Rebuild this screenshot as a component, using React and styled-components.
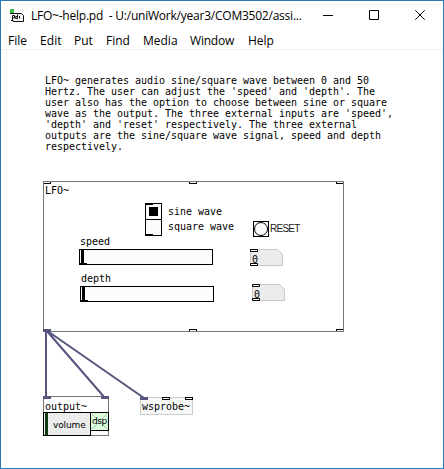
import React from 'react';
import styled, { createGlobalStyle } from 'styled-components';

const GlobalStyle = createGlobalStyle`
  * { box-sizing: border-box; }
  body { margin: 0; background: #fff; }
`;

const Window = styled.div`
  width: 444px;
  height: 469px;
  display: flex;
  flex-direction: column;
  overflow: hidden;
  background: #fff;
  border: 1px solid #2a7ab8;
  border-bottom-color: #1883d7;
  color: #000;
  font-family: "Open Sans", "Noto Sans", sans-serif;
`;

const TitleBar = styled.header`
  height: 29px;
  flex: none;
  display: flex;
  align-items: center;
  padding: 0 18px 0 9px;
`;

const Title = styled.div`
  flex: 1;
  margin-left: 5px;
  font-size: 12px;
  line-height: 16px;
  letter-spacing: -0.23px;
  white-space: pre;
`;

const WindowControls = styled.div`
  display: flex;
  gap: 36px;
  padding-bottom: 1px;
`;

const MenuBar = styled.nav`
  height: 20px;
  flex: none;
  display: flex;
  border-bottom: 1px solid #f0f0f0;
  padding-left: 7px;
  font-size: 12px;
  line-height: 22px;
`;

const MenuItem = styled.div`
  width: ${(p) => p.$width}px;
  letter-spacing: ${(p) => p.$track || 0}px;
  white-space: nowrap;
`;

const Canvas = styled.main`
  position: relative;
  flex: 1;
  font-family: "DejaVu Sans Mono", monospace;
  font-size: 10px;
  line-height: 11px;
  letter-spacing: -0.02px;
`;

/* A top-level object placed freely on the patch canvas. */
const Node = styled.section`
  position: absolute;
  left: ${(p) => p.$x - 1}px;
  top: ${(p) => p.$y - 50}px;
`;

const Comment = styled(Node)`
  white-space: pre;
`;

const Subpatch = styled(Node)`
  width: 301px;
  height: 151px;
  display: flex;
  flex-direction: column;
  border: 1px solid #777;
`;

const PortRow = styled.div`
  display: grid;
  grid-template-columns: 145px 147px 7px;
  height: 2px;
  margin-top: ${(p) => (p.$bottom ? 'auto' : '0')};
`;

const EdgePort = styled.div`
  width: 8px;
  border: solid #000;
  border-width: ${(p) => (p.$bottom ? '1px 1px 0' : '0 1px 1px')};
  &:first-child { width: 7px; border-left: 0; }
  &:last-child { width: 7px; border-right: 0; }
`;

const Name = styled.div`
  padding: 1px 0 0 1px;
`;

const ChoiceRow = styled.div`
  display: flex;
  height: 33px;
  margin-top: 7px;
  padding-left: 101px;
`;

const Radio = styled.div`
  width: 17px;
  height: 33px;
  border: 1px solid #000;
  background:
    linear-gradient(#000, #000) 0 0 / 7px 1px no-repeat,
    linear-gradient(#000, #000) 0 100% / 7px 1px no-repeat,
    #fcfcfc;
`;

const RadioCell = styled.div`
  height: 16px;
  display: grid;
  place-items: center;
  border-bottom: ${(p) => (p.$divided ? '1px solid #000' : '0')};
`;

const RadioMark = styled.div`
  width: 9px;
  height: 9px;
  background: #000;
`;

const ChoiceLabels = styled.div`
  width: 85px;
  display: flex;
  flex-direction: column;
  gap: 4px;
  margin-left: 6px;
  padding-top: 3px;
`;

const Bang = styled.div`
  width: 16px;
  height: 16px;
  margin-top: 18px;
  border: 1px solid #000;
  background: #fcfcfc;
`;

const BangCircle = styled.div`
  width: 14px;
  height: 14px;
  border: 1px solid #000;
  border-radius: 50%;
`;

const BangLabel = styled.div`
  margin: 20px 0 0 1px;
  font-family: "Liberation Sans", sans-serif;
  letter-spacing: -0.75px;
  color: #222;
`;

const ParamRow = styled.div`
  display: flex;
  align-items: flex-end;
  gap: ${(p) => p.$gap}px;
  height: 30px;
  margin-top: ${(p) => p.$space}px;
  padding-left: ${(p) => p.$indent}px;
`;

const Param = styled.label`
  align-self: flex-start;
  display: flex;
  flex-direction: column;
  gap: 2px;
  text-indent: 1px;
`;

const Slider = styled.div`
  width: 134px;
  height: 16px;
  border: 1px solid #000;
  background: linear-gradient(#000, #000) 0 100% / 7px 1px no-repeat, #fcfcfc;
  padding-left: 1px;
`;

const Knob = styled.div`
  width: 3px;
  height: 14px;
  background: #000;
`;

const NumberField = styled.div`
  display: grid;
  margin-bottom: ${(p) => p.$lift}px;
  > * { grid-area: 1 / 1; }
`;

const NumberValue = styled.span`
  height: 16px;
  padding: 5px 0 0 2px;
`;

const OutputBox = styled(Node)`
  width: 66px;
  height: 40px;
  border: 1px solid #777;
  padding: 4px 0 0 1px;
`;

const OutputControls = styled.div`
  display: flex;
  margin-left: -2px;
  font-family: "DejaVu Sans", sans-serif;
  font-size: 9px;
`;

const VolumeBox = styled.div`
  width: 48px;
  height: 24px;
  flex: none;
  display: flex;
  border: 1px solid #000;
  background: #ececec;
  padding-left: 1px;
  letter-spacing: -0.12px;
  line-height: 24px;
`;

const VolumeLevel = styled.div`
  width: 3px;
  height: 22px;
  margin-right: 5px;
  background: #123b12;
`;

const DspToggle = styled.div`
  width: 19px;
  height: 19px;
  flex: none;
  display: grid;
  margin-left: -1px;
  border: 1px solid #000;
  background: #dcfcdc;
  line-height: 17px;
  letter-spacing: -0.4px;
  > * { grid-area: 1 / 1; }
`;

const DspName = styled.span`
  width: 17px;
  padding-left: 1px;
`;

const ObjectBox = styled(Node)`
  width: 53px;
  height: 18px;
  border: 1px solid #ccc;
  background: #f6f8f8;
`;

const Inlets = styled.div`
  display: grid;
  grid-template-columns: 22px 23px 8px;
  margin: -1px -1px 1px;
`;

const Inlet = styled.div`
  width: 8px;
  height: 3px;
  border: 1px solid #000;
  background: #fff;
`;

const Caption = styled.div`
  padding-left: 1px;
`;

const Drawing = styled.svg`
  display: block;
`;

function EdgePorts({ bottom }) {
  return (
    <PortRow $bottom={bottom}>
      {[0, 1, 2].map((i) => <EdgePort key={i} $bottom={bottom} />)}
    </PortRow>
  );
}

function NumberBox({ lift }) {
  return (
    <NumberField $lift={lift}>
      <Drawing width="33" height="17" viewBox="0 0 33 17">
        <path d="M.5.5H27.5L32.5 5.5V16.5H.5Z" fill="#ececec" stroke="#c8c8c8" />
        <path d="M.5.5H7.5V2.5H.5ZM.5 14.5H7.5V16.5H.5Z" fill="#fff" stroke="#000" />
      </Drawing>
      <NumberValue>0</NumberValue>
    </NumberField>
  );
}

function SliderParam({ name }) {
  return (
    <Param>
      {name}
      <Slider><Knob /></Slider>
    </Param>
  );
}

function PatchIcon() {
  return (
    <svg width="16" height="16" viewBox="0 0 16 16">
      <path d="M2.5 5.5H12L13.5 7V13.5H1.5V7Z" fill="#f6f6f6" />
      <path d="M0 5.5H11.5L13.5 7.5V13.5H3V12.5H1" fill="none" stroke="#111" />
      <path d="M2.5 12V7.5H4.5V10H2.5M7.5 6.5V10.5H5.7V8.5H7M9.5 10.5V8" fill="none" stroke="#111" />
      <path d="M0 1H4V5H0Z" fill="#38c14a" />
    </svg>
  );
}

const menus = [
  ['File', 32], ['Edit', 34, 0.1], ['Put', 32], ['Find', 37], ['Media', 47], ['Window', 58, -0.2], ['Help', 40],
];

const description = `LFO~ generates audio sine/square wave between 0 and 50
Hertz. The user can adjust the 'speed' and 'depth'. The
user also has the option to choose between sine or square
wave as the output. The three external inputs are 'speed',
'depth' and 'reset' respectively. The three external
outputs are the sine/square wave signal, speed and depth
respectively.`;

export default function App() {
  return (
    <Window>
      <GlobalStyle />
      <TitleBar>
        <PatchIcon />
        <Title>{'LFO~-help.pd  - U:/uniWork/year3/COM3502/assi...'}</Title>
        <WindowControls>
          {['M0 5.5H10', 'M.5.5H9.5V9.5H.5Z', 'M.3.3L9.7 9.7M9.7.3L.3 9.7'].map((d) => (
            <svg key={d} width="10" height="10" viewBox="0 0 10 10" fill="none" stroke="#000"><path d={d} /></svg>
          ))}
        </WindowControls>
      </TitleBar>
      <MenuBar>
        {menus.map(([name, width, track]) => (
          <MenuItem key={name} $width={width} $track={track}>{name}</MenuItem>
        ))}
      </MenuBar>
      <Canvas>
        <Comment $x={45} $y={75}>{description}</Comment>

        <Subpatch $x={43} $y={181}>
          <EdgePorts />
          <Name>LFO~</Name>
          <ChoiceRow>
            <Radio>
              <RadioCell $divided><RadioMark /></RadioCell>
              <RadioCell />
            </Radio>
            <ChoiceLabels>
              <span>sine wave</span>
              <span>square wave</span>
            </ChoiceLabels>
            <Bang><BangCircle /></Bang>
            <BangLabel>RESET</BangLabel>
          </ChoiceRow>
          <ParamRow $indent={35} $gap={37} $space={0}>
            <SliderParam name="speed" />
            <NumberBox lift={0} />
          </ParamRow>
          <ParamRow $indent={36} $gap={38} $space={7}>
            <SliderParam name="depth" />
            <NumberBox lift={2} />
          </ParamRow>
          <EdgePorts bottom />
        </Subpatch>

        <OutputBox $x={43} $y={396}>
          output~
          <OutputControls>
            <VolumeBox><VolumeLevel />volume</VolumeBox>
            <DspToggle>
              <Drawing width="17" height="17" viewBox="0 0 17 17">
                <path d="M1 1L16 16M16 1L1 16" stroke="#a8c8a8" />
              </Drawing>
              <DspName>dsp</DspName>
            </DspToggle>
          </OutputControls>
        </OutputBox>

        <ObjectBox $x={140} $y={397}>
          <Inlets><Inlet /><Inlet /><Inlet /></Inlets>
          <Caption>wsprobe~</Caption>
        </ObjectBox>

        <Node $x={43} $y={329}>
          <Drawing width="110" height="72">
            <path d="M3 1V69M3 1L62 69M3 1L101 69" fill="none" stroke="#55557f" strokeWidth="2" />
            <path d="M0 0H8V3H0ZM0 67H8V70H0ZM58 67H66V70H58ZM97 68H105V71H97Z" fill="#55557f" />
          </Drawing>
        </Node>
      </Canvas>
    </Window>
  );
}
